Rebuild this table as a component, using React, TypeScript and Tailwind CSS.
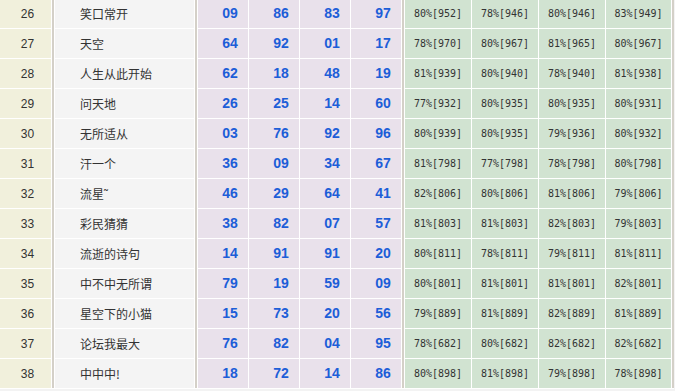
const rows: [number, string, string[], string[]][] = [
  [26, "笑口常开", ["09", "86", "83", "97"], ["80%[952]", "78%[946]", "80%[946]", "83%[949]"]],
  [27, "天空", ["64", "92", "01", "17"], ["78%[970]", "80%[967]", "81%[965]", "80%[967]"]],
  [28, "人生从此开始", ["62", "18", "48", "19"], ["81%[939]", "80%[940]", "78%[940]", "81%[938]"]],
  [29, "问天地", ["26", "25", "14", "60"], ["77%[932]", "80%[935]", "80%[935]", "80%[931]"]],
  [30, "无所适从", ["03", "76", "92", "96"], ["80%[939]", "80%[935]", "79%[936]", "80%[932]"]],
  [31, "汗一个", ["36", "09", "34", "67"], ["81%[798]", "77%[798]", "78%[798]", "80%[798]"]],
  [32, "流星˜", ["46", "29", "64", "41"], ["82%[806]", "80%[806]", "81%[806]", "79%[806]"]],
  [33, "彩民猜猜", ["38", "82", "07", "57"], ["81%[803]", "81%[803]", "82%[803]", "79%[803]"]],
  [34, "流逝的诗句", ["14", "91", "91", "20"], ["80%[811]", "78%[811]", "79%[811]", "81%[811]"]],
  [35, "中不中无所谓", ["79", "19", "59", "09"], ["80%[801]", "81%[801]", "81%[801]", "82%[801]"]],
  [36, "星空下的小猫", ["15", "73", "20", "56"], ["79%[889]", "81%[889]", "82%[889]", "81%[889]"]],
  [37, "论坛我最大", ["76", "82", "04", "95"], ["78%[682]", "80%[682]", "82%[682]", "82%[682]"]],
  [38, "中中中!", ["18", "72", "14", "86"], ["80%[898]", "81%[898]", "79%[898]", "78%[898]"]],
];

export default function App() {
  return (
    <div className="w-[675px] h-[391px] overflow-hidden bg-[#f3f3f3]">
      {/* ranking table, first row is cut off by 1px at the top */}
      <div className="-mt-px grid grid-cols-[51px_2px_139px_2px_50px_50px_50px_50px_2px_66px_66px_66px_65px_2px] grid-rows-[repeat(13,29px)] gap-px bg-white pb-px w-max">
        <div className="col-start-2 row-start-1 row-span-13 bg-[#d4d0c8]" />
        <div className="col-start-4 row-start-1 row-span-13 bg-[#d4d0c8]" />
        <div className="col-start-9 row-start-1 row-span-13 bg-[#d4d0c8]" />
        <div className="col-start-14 row-start-1 row-span-13 bg-[#d4d0c8]" />
        {rows.map(([rank, name, nums, pcts]) => (
          <div key={rank} className="contents">
            <div className="flex items-center justify-center pl-1 bg-[#f1f0dc] text-[12px] text-[#333] font-['Liberation_Sans',sans-serif]">
              {rank}
            </div>
            <div className="flex items-center pl-[25px] bg-[#f4f4f4] text-[12px] text-[#333] font-['Noto_Sans_CJK_SC',sans-serif]">
              {name}
            </div>
            {nums.map((n, i) => (
              <div
                key={i}
                className="flex items-center justify-center pl-[14px] bg-[#e9e1eb] text-[14px] font-bold text-[#1d5ed8] font-['Liberation_Sans',sans-serif]"
              >
                {n}
              </div>
            ))}
            {pcts.map((p, i) => (
              <div
                key={i}
                className="flex items-center justify-center bg-[#d1e3d1] text-[10px] text-[#333] font-['DejaVu_Sans_Mono',monospace]"
              >
                {p}
              </div>
            ))}
          </div>
        ))}
      </div>
    </div>
  );
}
